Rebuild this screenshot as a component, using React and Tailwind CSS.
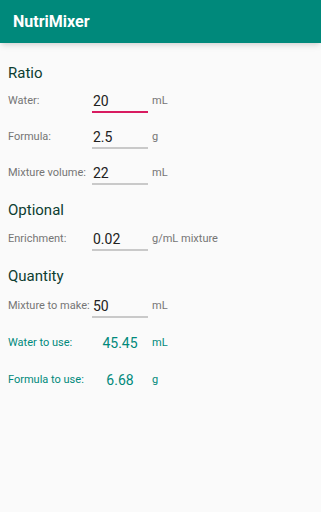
import React from 'react';

const font = { fontFamily: 'Roboto, "Noto Sans", sans-serif' };

function Heading({ children, className }) {
    return <div className={'h-[25px] leading-[25px] text-[15px] text-[#0d3d31] ' + className}>{children}</div>;
}

function InputRow({ label, value, unit, focused, className }) {
    return (
        <div className={'flex items-center h-[30px] ' + className}>
            <span className="w-[84px] text-[11px] text-[#757575] whitespace-nowrap">{label}</span>
            <div
                className={
                    'w-[56px] h-[22px] pl-[1px] text-[14px] leading-[20px] text-[#212121] mt-[1px] ' +
                    (focused ? 'border-b-2 border-[#d81b60]' : 'border-b-2 border-[#c9c9c9]')
                }
            >
                {value}
            </div>
            <span className="ml-[4px] text-[11px] text-[#757575] whitespace-nowrap">{unit}</span>
        </div>
    );
}

function ResultRow({ label, value, unit, className }) {
    return (
        <div className={'flex items-center h-[30px] text-[#00897b] ' + className}>
            <span className="w-[84px] text-[11px] whitespace-nowrap">{label}</span>
            <span className="w-[56px] text-center text-[14px]">{value}</span>
            <span className="ml-[4px] text-[11px]">{unit}</span>
        </div>
    );
}

export default function App() {
    return (
        <div className="min-h-[512px] bg-[#fafafa]" style={font}>
            <div className="h-[43px] bg-[#00897b] flex items-center pl-[13px] shadow-md">
                <span className="text-white text-[16px] font-bold">NutriMixer</span>
            </div>

            <div className="px-[8px] flex flex-col">
                <Heading className="mt-[18px]">Ratio</Heading>
                <InputRow label="Water:" value="20" unit="mL" focused />
                <InputRow label="Formula:" value="2.5" unit="g" className="mt-[6px]" />
                <InputRow label="Mixture volume:" value="22" unit="mL" className="mt-[6px]" />

                <Heading className="mt-[10px]">Optional</Heading>
                <InputRow label="Enrichment:" value="0.02" unit="g/mL mixture" className="mt-[1px]" />

                <Heading className="mt-[10px]">Quantity</Heading>
                <InputRow label="Mixture to make:" value="50" unit="mL" className="mt-[2px]" />
                <ResultRow label="Water to use:" value="45.45" unit="mL" className="mt-[7px]" />
                <ResultRow label="Formula to use:" value="6.68" unit="g" className="mt-[7px]" />
            </div>
        </div>
    );
}
